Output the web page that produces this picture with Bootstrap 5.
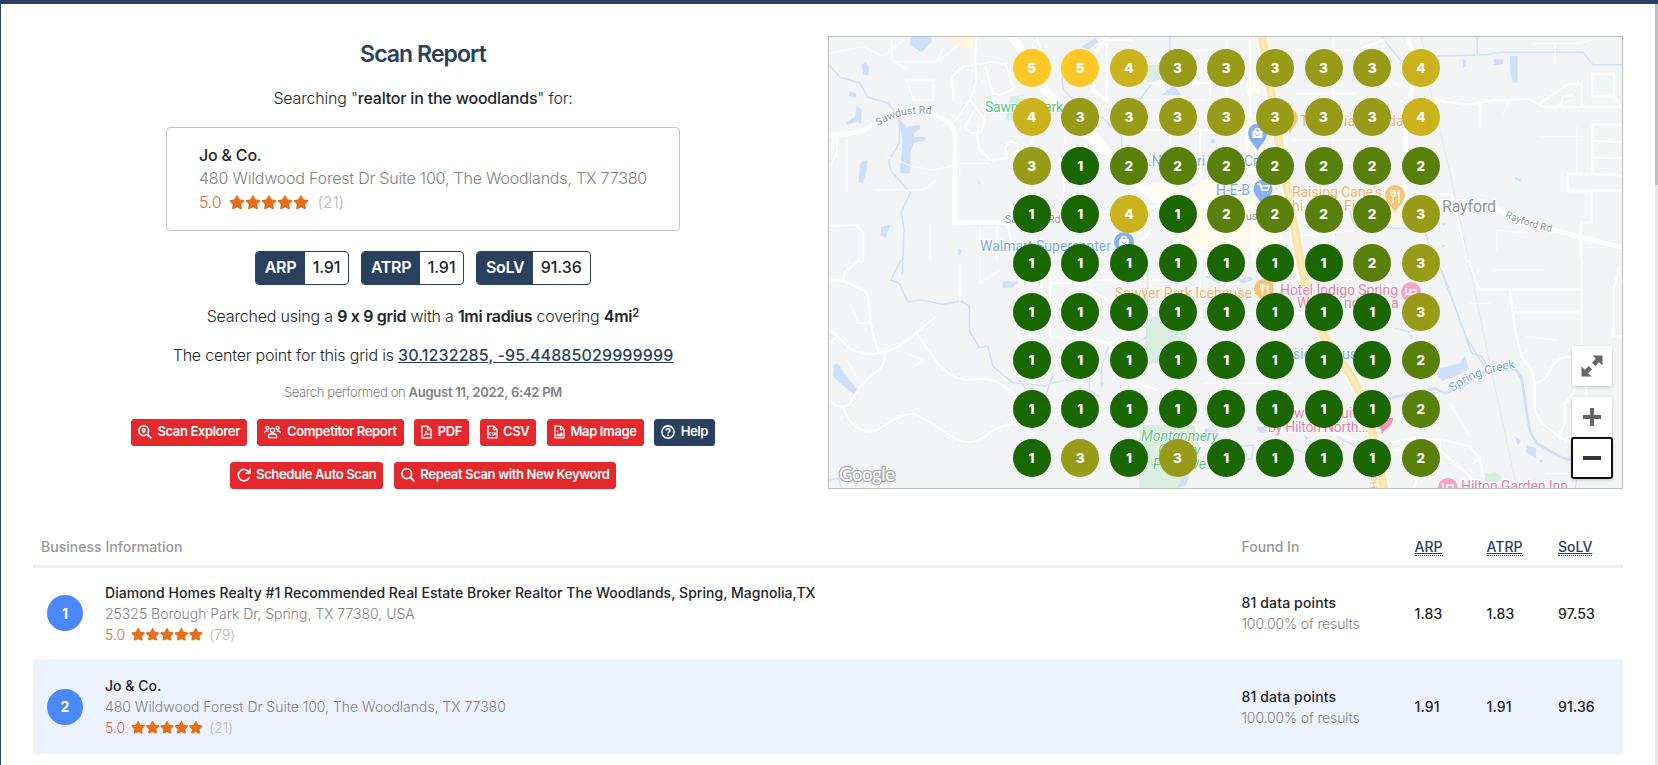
<!DOCTYPE html>
<html lang="en">
<head>
<meta charset="utf-8">
<meta name="viewport" content="width=device-width, initial-scale=1">
<title>Scan Report</title>
<link href="https://cdn.jsdelivr.net/npm/bootstrap@5.3.0/dist/css/bootstrap.min.css" rel="stylesheet">
<style>
  :root { --navy: #29405f; --red: #e5282c; --star: #e4701e; }
  html, body { height: 100%; overflow: hidden; }
  body { font-family: Inter, "Liberation Sans", sans-serif; font-feature-settings: "calt" 0; font-size: 16px; color: #212529; font-weight: 300; }
  .page { height: 765px; border-top: 4px solid var(--navy); border-left: 1px solid var(--navy); }
  .page-main { padding: 0 32px; min-width: 0; }
  .rail { width: 3px; background: #e6e6e6; }
  .rail-thumb { height: 181px; background: #c1c1c1; }
  .hero { height: 525px; }
  .summary { padding: 34px 15px 0 0; }
  .title { font-size: 23px; line-height: 30px; font-weight: 600; letter-spacing: -.93px; color: var(--navy); margin: 1px 0 17px; }
  .line { line-height: 24px; letter-spacing: -.2px; margin: 0; }
  .line b, .fine b { font-weight: 500; }
  .line .strong6 { font-weight: 600; letter-spacing: -.33px; }
  .line a { color: var(--navy); font-weight: 500; letter-spacing: .12px; }
  .line sup { font-size: 12px; font-weight: 500; top: -.45em; }
  .biz { width: 514px; height: 104px; border: 1px solid #c6c6c6; border-radius: 4px; padding: 16px 32px 14px; line-height: 23.4px; margin: 17px 0 20px; letter-spacing: -.2px; }
  .nm { font-weight: 500; }
  .addr { color: #828282; }
  .score { color: #d9683a; }
  .cnt { color: #b8b8b8; }
  .star { fill: var(--star); flex: none; }
  .stat { height: 34px; border: 1px solid var(--navy); border-radius: 4px; font-weight: 500; line-height: 31px; overflow: hidden; }
  .stat span:first-child { background: var(--navy); color: #fff; font-weight: 600; padding: 0 8.500px; letter-spacing: -.35px; }
  .stat span:last-child { padding: 0 8px; letter-spacing: -.06px; }
  .fine { font-size: 13px; line-height: 20px; color: #828282; letter-spacing: -.39px; }
  .fine b { letter-spacing: -.25px; font-weight: 600; }
  .act { --bs-btn-bg: var(--red); --bs-btn-border-color: var(--red); --bs-btn-color: #fff; height: 27px; padding: 0 6px 1px; font-size: 13px; font-weight: 600; letter-spacing: -.36px; border-radius: 3px; gap: 5.5px; }
  .act-navy { --bs-btn-bg: var(--navy); --bs-btn-border-color: var(--navy); }
  .act svg { fill: none; stroke: #fff; stroke-width: 1.6; flex: none; }
  .mapbox { width: 795px; height: 453px; margin-top: 32px; border: 1px solid #bdbdbd; background: #f3f4f6; overflow: hidden; }
  .mapbox > svg { display: block; }
  .pin { position: absolute; width: 38px; height: 38px; border-radius: 50%; color: #fff; font: 800 13.5px/38px Inter, sans-serif; text-align: center; }
  .v1 { background: #1a6600; } .v2 { background: #58800a; } .v3 { background: #979b18; } .v4 { background: #cbb31e; } .v5 { background: #fec728; }
  .ctl { position: absolute; right: 10px; width: 40px; height: 40px; background: #fff; border-radius: 2px; box-shadow: 0 1px 4px -1px rgba(0,0,0,.3); }
  .rd { fill: none; stroke: #fff; stroke-linecap: round; stroke-linejoin: round; }
  .fnt { opacity: .65; }
  .riv { fill: none; stroke: #d2dff5; stroke-width: 4.5; stroke-linejoin: round; }
  .lake { fill: #cddffb; }
  .lbl { font-family: Roboto, sans-serif; font-size: 14px; font-weight: 400; stroke: #fff; stroke-width: 1.6px; paint-order: stroke; stroke-linejoin: round; }
  .lbl.b { fill: #7ea8ea; } .lbl.o { fill: #f3b069; } .lbl.p { fill: #e87fa9; } .lbl.g { fill: #5ec482; } .lbl.k { fill: #8f959b; }
  .results { table-layout: fixed; font-size: 14px; line-height: 21px; letter-spacing: .03px; --bs-table-bg: transparent; margin: 0; }
  .results > :not(caption) > * > * { padding: 0; border: 0; box-shadow: none; vertical-align: middle; }
  .results thead th { height: 37px; border-bottom: 3px solid #eee; font-weight: 500; color: #979797; }
  .results abbr { color: var(--navy); text-decoration: underline; border-bottom: 1px dotted var(--navy); line-height: 16px; display: inline-block; cursor: help; }
  .results tbody td { color: #212529; }
  .results tbody td:first-child { padding: 0 0 0 14px; }
  .results .val { font-weight: 500; letter-spacing: .14px; }
  .results .sub { color: #828282; letter-spacing: -.14px; }
  .results .addr { letter-spacing: -.02px; }
  .rank { width: 36px; height: 36px; border-radius: 50%; background: #4a88fb; color: #fff; font-weight: 700; }
  .mine { background: #ecf3ff; }
</style>
</head>
<body>
<svg class="d-none">
  <symbol id="star" viewBox="0 0 576 512"><path d="M259.3 17.8L194 150.2 47.9 171.5c-26.2 3.8-36.7 36.1-17.7 54.6l105.7 103-25 145.5c-4.5 26.3 23.2 46 46.4 33.7L288 439.6l130.7 68.7c23.2 12.2 50.9-7.4 46.4-33.7l-25-145.5 105.7-103c19-18.5 8.5-50.8-17.7-54.6L382 150.2 316.7 17.8c-11.7-23.6-45.6-23.9-57.4 0z"/></symbol>
  <symbol id="stars" viewBox="0 0 2880 512"><use href="#star" width="576" height="512"/><use href="#star" x="576" width="576" height="512"/><use href="#star" x="1152" width="576" height="512"/><use href="#star" x="1728" width="576" height="512"/><use href="#star" x="2304" width="576" height="512"/></symbol>
</svg>
<div class="page d-flex">
  <main class="page-main flex-grow-1">
    <section class="hero d-flex">
      <div class="summary w-50 d-flex flex-column align-items-center">
        <h1 class="title">Scan Report</h1>
        <p class="line">Searching "<b>realtor in the woodlands</b>" for:</p>
        <div class="biz">
          <div class="nm">Jo &amp; Co.</div>
          <div class="addr">480 Wildwood Forest Dr Suite 100, The Woodlands, TX 77380</div>
          <div class="d-flex align-items-center"><span class="score">5.0</span><svg class="star ms-2 me-2" width="80" height="14.5"><use href="#stars"/></svg><span class="cnt">(21)</span></div>
        </div>
        <div class="d-flex" style="gap:12px">
          <div class="stat d-flex"><span>ARP</span><span>1.91</span></div>
          <div class="stat d-flex"><span>ATRP</span><span>1.91</span></div>
          <div class="stat d-flex"><span>SoLV</span><span>91.36</span></div>
        </div>
        <p class="line" style="margin-top:19px">Searched using a <b class="strong6">9 x 9 grid</b> with a <b class="strong6">1mi radius</b> covering <b class="strong6">4mi</b><sup>2</sup></p>
        <p class="line" style="margin-top:15px">The center point for this grid is <a href="#">30.1232285, -95.44885029999999</a></p>
        <div class="fine" style="margin-top:15px">Search performed on <b>August 11, 2022, 6:42 PM</b></div>
        <div class="d-flex" style="gap:10.5px;margin-top:17px">
          <button class="btn act d-flex align-items-center"><svg width="14" height="14" viewBox="0 0 14 14"><circle cx="5.7" cy="5.7" r="4.9"/><path d="M9.4 9.4l4 4"/><path d="M5.7 8.6C4.2 6.8 3.7 6 3.7 5a2 2 0 0 1 4 0c0 1-.5 1.8-2 3.6z" fill="#fff" stroke="none"/><circle cx="5.7" cy="5" r=".7" fill="#e5282c" stroke="none"/></svg>Scan Explorer</button>
          <button class="btn act d-flex align-items-center"><svg width="17" height="14" viewBox="0 0 17 14" style="stroke-width:1.3"><circle cx="8.5" cy="5.3" r="2.1"/><circle cx="3.4" cy="2.9" r="1.5"/><circle cx="13.6" cy="2.9" r="1.5"/><path d="M4.5 12.6v-1.4a2.2 2.2 0 0 1 2.2-2.2h3.6a2.2 2.2 0 0 1 2.2 2.2v1.4zM.7 8.3V7.6A1.4 1.4 0 0 1 2.1 6.2h2.3M16.3 8.3V7.6a1.4 1.4 0 0 0-1.4-1.4h-2.3"/></svg>Competitor Report</button>
          <button class="btn act d-flex align-items-center"><svg width="11" height="14" viewBox="0 0 11 14" style="stroke-width:1.3"><path d="M1 1.2h5.8L10 4.4v8.4H1zM6.5 1.2v3.5H10"/><path d="M2.7 11c1.5-.8 2.7-3 2.5-5 .3 2 1.5 3.3 3.3 3.3-2-.3-4 .2-5.8 1.700z" stroke-width=".9"/></svg>PDF</button>
          <button class="btn act d-flex align-items-center"><svg width="11" height="14" viewBox="0 0 11 14" style="stroke-width:1.3"><path d="M1 1.2h5.8L10 4.4v8.4H1zM6.5 1.2v3.5H10"/><path d="M4 7.5H2.800v2.800H4M6.400 7.500H5.200v1.300h1.200v1.500H5M7.300 7.300l.8 3 .8-3" stroke-width=".9"/></svg>CSV</button>
          <button class="btn act d-flex align-items-center"><svg width="11" height="14" viewBox="0 0 11 14" style="stroke-width:1.3"><path d="M1 1.2h5.8L10 4.4v8.4H1zM6.5 1.2v3.5H10"/><path d="M2.5 11.300V9.800l1.300-1.200 1 1L7.300 7l1.300 1.200v3.100z" fill="#fff" stroke="none"/><circle cx="3.5" cy="6.4" r=".9" fill="#fff" stroke="none"/></svg>Map Image</button>
          <button class="btn act act-navy d-flex align-items-center"><svg width="14" height="14" viewBox="0 0 14 14"><circle cx="7" cy="7" r="6.1"/><path d="M5.1 5.5a1.900 1.700 0 1 1 2.900 1.400C7.300 7.300 7 7.500 7 8.300"/><circle cx="7" cy="10.2" r=".9" fill="#fff" stroke="none"/></svg>Help</button>
        </div>
        <div class="d-flex" style="gap:10.5px;margin-top:16px">
          <button class="btn act d-flex align-items-center"><svg width="14" height="14" viewBox="0 0 14 14"><path d="M12.3 9.300A5.700 5.700 0 1 1 11.800 4M13 .8v4.400H8.600"/></svg>Schedule Auto Scan</button>
          <button class="btn act d-flex align-items-center"><svg width="14" height="14" viewBox="0 0 14 14"><circle cx="5.7" cy="5.7" r="4.9"/><path d="M9.4 9.4l4 4"/></svg>Repeat Scan with New Keyword</button>
        </div>
      </div>

      <div class="mapbox position-relative flex-shrink-0" id="map">
        <svg width="793" height="451" viewBox="829 37 793 451">
          <!-- north-west -->
          <g transform="translate(820 30) scale(.33333)">
            <path d="M380 20h90l-20 35-40-5z" fill="#fdf5dc"/>
            <path d="M570 200l40-5 15 30-10 50-60-5z" fill="#d8efde"/>
            <path class="lake" d="M270 20h65v15l-30 32-35-22zM125 105l12-10 10 15-2 28-15-5zM88 183l22 8-3 14-20-8zM110 228l15 12-2 40-15-5-25 10-5-5 28-22zM235 260l22 30 40-5 5 10-20 15v10l35 2v8l-35 10-10 25-2 65h-30l8-100zM120 400l22-10-2 30-12 40-12-5zM183 590l28-5-15 40-14-10zM472 445l10 20-5-3zM415 655l10 5-5 18-6-5z"/>
            <path class="lake" d="M785 50l40-25 10 10-30 25z"/>
            <path class="riv" d="M25 103l35 38 60 18 22 42 60 18 18 20 18 40v60l-32 55 8 30 58 65-28 55 8 55-5 135M725 130l5 50 30 30"/>
            <path class="rd" stroke-width="13" d="M25 315c75 0 105-10 165-45s110-30 160-12 58 42 55 82l-2 237 160 2"/>
            <path class="rd" stroke-width="24" d="M575 15l100 165 175 180"/>
            <path class="rd" stroke-width="6" d="M470 20l-5 60 5 70-20 60-50 70M400 210l-3-70 30-30 90-15 40 10 25 70-40 20-25-5-15-60-5-20M455 215l40 55-10 35-30 5-20-20 25-45M470 315l10 45 30 30 50-5 35-25-5-20-20-5-15 15 5 25M650 20l20 60M50 315v60l-20 35M38 320v40M30 588l80-3 20 25v80M545 575l20 20 20 90M640 320l-10 60v100M735 320l-5 180M600 200l60 20"/>
            <path class="rd fnt" stroke-width="4" d="M30 70l100-20 60 30 60-50M215 30v60l50 30M260 150h80v60h-60zM230 95h120l20-40M360 90l60-50M80 330v150M170 480h140l40-30M200 380l80 30 60 10 90-20 80 0M330 580v110M420 430l-5-60M480 580v110M530 590v100"/>
          </g>
          <!-- north -->
          <g transform="translate(1090 30) scale(.33333)">
            <path d="M175 105h40v40l-20 10h-25z" fill="#d8efde"/>
            <ellipse cx="210" cy="485" rx="55" ry="26" fill="#fefaee"/>
            <path d="M300 480q40-50 120-30l40 30 120 140-20 40H270l-10-30 60-60zM470 150h40v40h-40zM460 270l50 0 20 170-60-10z" fill="#fefaee"/>
            <path class="lake" d="M215 195l35-30 25 30zM362 328h12v12h-12z"/>
            <path class="riv" d="M240 20v60l-90 130-60 100M35 260l60 60v60M780 540l10 40 50 30"/>
            <path class="rd" stroke-width="24" d="M-5 300l140 160 100 70"/>
            <path class="rd" stroke-width="7" d="M0 560h60l20-30h400M180 600l-40 60M50 20l-40 60v100l40 30v-180h70M480 20v240M180 160h180v130M490 500v190"/>
            <path class="rd fnt" stroke-width="5" d="M120 210h220M90 300h280M290 60h120M410 30v200M600 60h200M620 190h180M640 300h90M730 20v640M610 330h200M240 320v130M330 300v150M600 620l200-20M650 400h130"/>
          </g>
          <!-- north-east -->
          <g transform="translate(1360 30) scale(.33333)">
            <path class="lake" d="M308 88l10 2v20l-10 3zM402 88h28v14l-28 3zM450 78h23v80h-14l-8-30zM465 440l18 8-3 8-16-8zM245 645l10 0-8 10zM247 580h8v6h-8z"/>
            <path class="riv" d="M65 20l60 75M230 78l150-4 40-7h250l28 37h90M352 20v54M85 595h50l60 10 20 60 30 60 75 200 60 95"/>
            <path d="M75 540l10-60h55v100H70z" fill="#fdf5dc"/>
            <path class="rd" stroke-width="13" d="M140 15l17 50v110l-18 80-5 280"/>
            <path class="rd" stroke-width="14" d="M150 515h220l50 25 60 40 120 25 190 48"/>
            <path class="rd" stroke-width="7" d="M230 212l90 12 80-13 110-3 40 23h238M540 220l85-58h40v68M600 225l10-25 30-5M697 132h65v68h-65zM765 200l15 25M785 283h-87v150h-75v50h72v95h-32v112M700 332l85 5M700 382l85 3M700 432l85 4M695 482h90M235 493h40l50 197M-10 60l80-30"/>
            <path class="rd fnt" stroke-width="4" d="M520 40h130l50-10M585 40v60M360 290v-80h90l-20 40M540 320h130M410 660v-60l90 10M80 140l40 30h40M650 290v140M0 40l60 60"/>
            <path d="M185 20l20 130 70 300 50 240" fill="none" stroke="#e8eaec" stroke-width="4"/>
          </g>
          <!-- south-west -->
          <g transform="translate(820 260) scale(.33333)">
            <path class="lake" d="M42 315l10-5 25 35 35 45-8 15-65-55zM548 63l45 3-15 17h-30z"/>
            <path class="riv" d="M243 0l-30 60 25 10 25 55 45-5 60 13 55-10 25 15v75l30 50 25-5 15 60 60 50 100 10 20-10 60-10M700 340l-20 60M590 350l30 40M808 350v40l30 20M25 660l30-5 10 30"/>
            <path class="rd" stroke-width="7" d="M25 62h45l65 30 10 20 7 80 22 80M70 60l5-25 45-35M30 212c50 30 40 60 110 70 90 0 110-35 150-65l55-45M30 248l20-18M193 275c10 70-50 50-100 150-10 20-50 20-65-5M70 440c10 40 40 75 80 75s60-50 130-53c60 20 100 65 140 80 50 10 60 0 90-25 40-25 80-20 110-70M290 220c30 40 80 140 150 140 60-5 90-10 150 50M690 0v70h120M665 75l-5 40 20 10M690 70v160M690 230l140 10M600 180l-5 50 30 60"/>
            <path class="rd fnt" stroke-width="4" d="M90 130l25 60h30M80 300l30 50M420 20v110M260 280l50 20-30 20M480 10v60l60-40"/>
          </g>
          <!-- south -->
          <g transform="translate(1090 260) scale(.33333)">
            <path d="M180 170h60l48 45v55l-50 40h-55l-20-50zM148 495h165l20 100-70 90H148z" fill="#daeee0"/>
            <path class="lake" d="M345 50l30-10 30 20-20 10zM440 60l40-10 10 10-30 10zM340 175l8-12v15zM344 505l35 5v18h-35zM500 500h30v18h-20zM30 365l12 5-8 15zM640 525l15 8-5 8zM278 650l20-5-10 30-30 10z"/>
            <path class="riv" d="M175 0l-5 230-30 20M55 260l-20 60v50M440 560l50-5-5 40-30 10M590 560l60 20M740 530l60 30M360 170l30-30"/>
            <path class="rd" stroke-width="7" d="M0 90l50 30M0 240l60 10 60-40M180 0v100M330 160h400M130 360l70 30M600 480l200 60"/>
            <path class="rd fnt" stroke-width="5" d="M0 60h300M120 210v120M330 0v120M470 0v60M340 370h260M720 60h80M0 470h100"/>
          </g>
          <!-- south-east -->
          <g transform="translate(1360 260) scale(.33333)">
            <path class="lake" d="M240 325l60-15 15-22 12 40-40 20-40 15-15-20zM463 528l22 15-12 12zM500 555l28 10v30l-30-20zM535 600l15 0-8 8zM145 225l15 0-5 15z"/>
            <path d="M375 640l30-5 20 15-5 15h-45z" fill="#daeee0"/>
            <path class="riv" style="stroke-width:8" d="M85 415l140-30 30 15 60-25 60-40 90-10 20 30 15 100 10 60 20 35 70 40 30 10 40-5"/>
            <path class="riv" d="M245 30l90 250 30 10 15 25M105 205l40 10 30-5M650 660l-5 30"/>
            <path class="rd" stroke-width="7" d="M665 0v260M355 88h310M463 158h200M450 90l15 120 20 80 30 40 10 50v70l20 40 75 55M525 370c60-10 30-80 110-80M595 530l20-40v-60l30-40M780 20l-20 70v140h28M678 370v30M60 555l90-20 100 5 80 20 30 40 10 50M90 570l150 0 80 70 30 40M240 545v20M360 590l-20 20M170 660l-10 30"/>
            <path d="M325 0l60 290 85 390" fill="none" stroke="#e8eaec" stroke-width="4"/>
            <path d="M325 0l33 88" fill="none" stroke="#fff" stroke-width="7"/>
            <path class="rd fnt" stroke-width="4" d="M400 30h150M330 130h60M500 230l90 10M270 430l60 100M560 640h80"/>
          </g>
          <!-- interstate -->
          <g fill="none">
            <path d="M1261 30l6 36 10 64 20 112 4 22 9 38 14 34 28 41 14 28 7 30 14 70" stroke="#fff" stroke-width="12"/>
            <path d="M1261 30l6 36 10 64 20 112 4 22 9 38 14 34 28 41 14 28 7 30 14 70" stroke="#fbe5ab" stroke-width="9"/>
            <path d="M1261 30l6 36 10 64 20 112 4 22 9 38 14 34 28 41 14 28 7 30 14 70" stroke="#fdf0cb" stroke-width="1.5"/>
          </g>
          <!-- place markers -->
          <path d="M1257.5 151c-2-6-9-9-9.5-18a9.500 9.500 0 1 1 19 0c-.5 9-7.500 12-9.500 18z" fill="#86aef0"/><path d="M1252.500 131h10v7h-10z" fill="#fff"/><path d="M1255 131a2.500 2.500 0 0 1 5 0" fill="none" stroke="#fff" stroke-width="1.300"/><path d="M1255.500 133.500a2 2 0 0 0 4 0" fill="none" stroke="#86aef0"/>
          <path d="M1263 206c-2-6-9-9-9.5-17a9.500 9.500 0 1 1 19 0c-.5 8-7.500 11-9.500 17z" fill="#86aef0"/><path d="M1257 184h3l2 6h6l1-4h-8M1262 193h.5m5 0h.5" fill="none" stroke="#fff" stroke-width="1.6"/>
          <circle cx="1124" cy="242" r="10" fill="#86aef0"/><path d="M1119 239h10v7h-10z" fill="#fff"/><path d="M1121.500 239a2.500 2.500 0 0 1 5 0" fill="none" stroke="#fff" stroke-width="1.300"/><path d="M1122 241.500a2 2 0 0 0 4 0" fill="none" stroke="#86aef0"/>
          <path d="M1395 213c-2-7-9-9-10-18a10 10 0 1 1 20 0c-1 9-8 11-10 18z" fill="#f8c473"/><path d="M1391 190v4q0 2 2 2v7m-2-13v4m2-4v4m2-4v4q0 2-2 2M1399 190v13m0-13q-2 3 0 7" fill="none" stroke="#fff" stroke-width="1.2"/>
          <circle cx="1264" cy="289" r="10" fill="#f8c473"/><path d="M1261 284v4q0 2 1.500 2v5m-1.500-11v4m1.500-4v4m1.500-4v4q0 2-1.500 2M1268 284v11m0-11q-2 3 0 7" fill="none" stroke="#fff" stroke-width="1.2"/>
          <path d="M1290 108q10 4 7 14l-8 12z" fill="#f8c473"/>
          <circle cx="1411" cy="292" r="10" fill="#f4a5c3"/><path d="M1406 288v8m0-2h10v2m0-2v-4h-6v4" fill="none" stroke="#fff" stroke-width="1.3"/>
          <path d="M1382 434c-1-8-6-9-7-16h18c0 9-8 10-11 16z" fill="#ee94b7"/>
          <circle cx="1448" cy="488" r="10" fill="#f4a5c3"/><path d="M1443 483v8m0-2h10m0-1v-3h-6v4" fill="none" stroke="#fff" stroke-width="1.3"/>
          <!-- labels -->
          <text class="lbl g" x="985" y="112" textLength="78">Sawmill Park</text>
          <text class="lbl k" x="1005" y="223" style="font-size:10.5px">Sawdust Rd</text>
          <text class="lbl b" x="980" y="251" textLength="131">Walmart Supercenter</text>
          <text class="lbl b" x="1148" y="166">.N</text><text class="lbl b" x="1197" y="166">ri</text><text class="lbl b" x="1244" y="166">Cr</text>
          <text class="lbl b" x="1216" y="195" textLength="34">H-E-B</text>
          <text class="lbl k" x="1246" y="220" style="font-size:10.5px">us</text>
          <text class="lbl o" x="1300" y="126">T</text><text class="lbl o" x="1344" y="126">ia</text><text class="lbl o" x="1388" y="126">da</text>
          <text class="lbl o" x="1292" y="197" textLength="90">Raising Cane's</text>
          <text class="lbl o" x="1292" y="211">hi</text><text class="lbl o" x="1344" y="211">Fin</text>
          <text class="lbl o" x="1115" y="298" textLength="137">Sawyer Park Icehouse</text>
          <text class="lbl p" x="1280" y="295" textLength="118">Hotel Indigo Spring</text>
          <text class="lbl p" x="1297" y="308">W</text><text class="lbl p" x="1344" y="308">nd</text><text class="lbl p" x="1391" y="308">a</text>
          <text class="lbl b" x="1293" y="359">sid</text><text class="lbl b" x="1342" y="359">us</text>
          <text class="lbl p" x="1294" y="418">w</text><text class="lbl p" x="1341" y="418">uit</text>
          <text class="lbl p" x="1268" y="432" textLength="101">by Hilton North...</text>
          <g font-style="italic"><text class="lbl g" x="1141" y="441" textLength="77">Montgomery</text><text class="lbl g" x="1158" y="455">County</text><text class="lbl g" x="1153" y="469" textLength="53">Preserve</text></g>
          <text class="lbl p" x="1461" y="491" textLength="107">Hilton Garden Inn</text>
          <text class="lbl k" x="1442" y="212" style="font-size:16px" textLength="54">Rayford</text>
          <path id="sd" d="M878 126q28-17 60-11" fill="none"/><path id="rr" d="M1505 217q20 10 60 18" fill="none"/><path id="sc" d="M1453 392q24-20 70-25" fill="none"/>
          <text class="lbl k" style="font-size:10.500px"><textPath href="#sd">Sawdust Rd</textPath></text>
          <text class="lbl k" style="font-size:10px"><textPath href="#rr">Rayford Rd</textPath></text>
          <text class="lbl b" style="font-size:12px"><textPath href="#sc">Spring Creek</textPath></text>
          <text class="lbl o" transform="translate(1378 488) rotate(-98)" style="font-size:10px">Ha</text>
          <text x="839" y="480.5" textLength="56" style="font:500 19px Lato,sans-serif;fill:#fff;stroke:#a3a6a9;stroke-width:2.4px;paint-order:stroke">Google</text>
        </svg>
        <div class="ctl d-flex align-items-center justify-content-center" style="top:309px"><svg width="22" height="22" viewBox="0 0 22 22" fill="#666"><path d="M11.500 .5h10v10l-3.300-3.300-3.900 3.900-3.400-3.400 3.900-3.900zM10.500 21.500H.5v-10l3.300 3.300 3.900-3.900 3.400 3.400-3.900 3.900z"/></svg></div>
        <div class="ctl d-flex align-items-center justify-content-center" style="top:360px"><svg width="18" height="18"><path d="M0 9h18M9 0v18" stroke="#666" stroke-width="4"/></svg></div>
        <div class="ctl d-flex align-items-center justify-content-center" style="top:400px;right:9px;width:42px;height:42px;border:2px solid #111;border-radius:3px"><svg width="18" height="4"><path d="M0 2h18" stroke="#333" stroke-width="4"/></svg></div>
      </div>
    </section>

    <table class="table results">
      <colgroup><col style="width:72px"><col><col style="width:173px"><col style="width:72px"><col style="width:71.5px"><col style="width:65px"></colgroup>
      <thead><tr><th colspan="2" class="ps-2">Business Information</th><th>Found In</th><th><abbr>ARP</abbr></th><th><abbr>ATRP</abbr></th><th><abbr>SoLV</abbr></th></tr></thead>
      <tbody>
        <tr style="height:93px">
          <td><div class="rank d-flex align-items-center justify-content-center">1</div></td>
          <td><div class="nm">Diamond Homes Realty #1 Recommended Real Estate Broker Realtor The Woodlands, Spring, Magnolia,TX</div><div class="addr">25325 Borough Park Dr, Spring, TX 77380, USA</div><div class="d-flex align-items-center"><span class="score">5.0</span><svg class="star" style="margin:0 6px" width="72" height="12.8"><use href="#stars"/></svg><span class="cnt">(79)</span></div></td>
          <td><div class="val">81 data points</div><div class="sub">100.00% of results</div></td>
          <td class="val">1.83</td><td class="val">1.83</td><td class="val">97.53</td>
        </tr>
        <tr class="mine" style="height:95px">
          <td><div class="rank d-flex align-items-center justify-content-center">2</div></td>
          <td><div class="nm">Jo &amp; Co.</div><div class="addr">480 Wildwood Forest Dr Suite 100, The Woodlands, TX 77380</div><div class="d-flex align-items-center"><span class="score">5.0</span><svg class="star" style="margin:0 6px" width="72" height="12.8"><use href="#stars"/></svg><span class="cnt">(21)</span></div></td>
          <td><div class="val">81 data points</div><div class="sub">100.00% of results</div></td>
          <td class="val">1.91</td><td class="val">1.91</td><td class="val">91.36</td>
        </tr>
      </tbody>
    </table>
  </main>
  <div class="rail flex-shrink-0"><div class="rail-thumb"></div></div>
</div>
<script src="https://cdn.jsdelivr.net/npm/bootstrap@5.3.0/dist/js/bootstrap.bundle.min.js"></script>
<script>
  // Rank found at each point of the 9 x 9 scan grid, north to south
  const ranks = ['554333334', '433333334', '312222222', '114122223', '111111123', '111111113', '111111112', '111111112', '131311112'];
  const map = document.getElementById('map');
  ranks.forEach((row, r) => [...row].forEach((v, c) => {
    const pin = document.createElement('div');
    pin.className = 'pin v' + v;
    pin.textContent = v;
    pin.style.left = (183.6 + c * 48.65) + 'px';
    pin.style.top = (12.2 + r * 48.7) + 'px';
    map.append(pin);
  }));
</script>
</body>
</html>
